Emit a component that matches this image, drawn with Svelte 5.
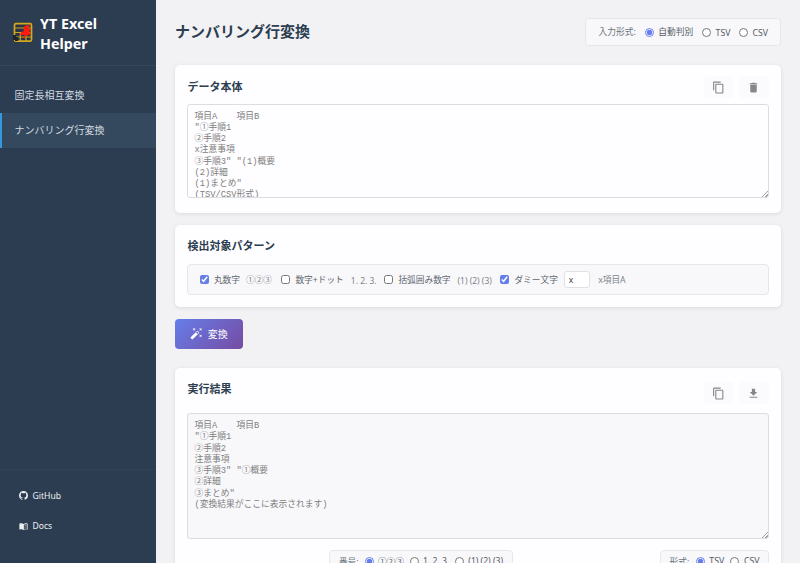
<script>
  let inputFormat = $state('auto');
  let numberStyle = $state('circle');
  let outputFormat = $state('tsv');
  let circled = $state(true);
  let dotted = $state(false);
  let bracketed = $state(false);
  let dummy = $state(true);
  let dummyChar = $state('x');

  const source = '項目A\t項目B\n"①手順1\n②手順2\nx注意事項\n③手順3"\t"(1)概要\n(2)詳細\n(1)まとめ"\n(TSV/CSV形式)';
  const result = '項目A\t項目B\n"①手順1\n②手順2\n注意事項\n③手順3"\t"①概要\n②詳細\n③まとめ"\n(変換結果がここに表示されます)';
</script>

{#snippet copyIcon()}
  <svg width="13" height="13" viewBox="0 0 24 24"><path d="M16 1H4c-1.1 0-2 .9-2 2v14h2V3h12V1zm3 4H8c-1.1 0-2 .9-2 2v14c0 1.1.9 2 2 2h11c1.1 0 2-.9 2-2V7c0-1.1-.9-2-2-2zm0 16H8V7h11v14z" /></svg>
{/snippet}

<div class="app">
  <aside>
    <div class="brand">
      <svg class="logo" width="20" height="21" viewBox="0 0 20 21">
        <rect x="1.500" y="1.700" width="17" height="17.500" rx="1.500" fill="#2b3346" stroke="#d0a91c" stroke-width="1.700" />
        <path d="M2 6h16M2 10.500h16M7.300 10v9M13 10v9M2 15h16" stroke="#c9a51c" stroke-width="1.200" fill="none" />
        <path d="M0 13h3v2h2v4H2v-1H0z" fill="#20252c" />
        <path d="M11.500 3.800 17 3l-2 3.800h3l-2.200 3.500H18l-1.600 2.700-2.400.2-3 4 .4-4.200H7l1.400-3.200 2-.2z" fill="#fb1b12" />
      </svg>
      <h1>YT Excel<br />Helper</h1>
    </div>
    <nav>
      <a href="#fixed">固定長相互変換</a>
      <a href="#numbering" class="active">ナンバリング行変換</a>
    </nav>
    <div class="links">
      <a href="#github">
        <svg width="9" height="9" viewBox="0 0 16 16"><path d="M8 0C3.58 0 0 3.58 0 8c0 3.54 2.29 6.53 5.47 7.59.4.07.55-.17.55-.38 0-.19-.01-.82-.01-1.49-2.01.37-2.53-.49-2.69-.94-.09-.23-.48-.94-.82-1.13-.28-.15-.68-.52-.01-.53.63-.01 1.08.58 1.23.82.72 1.21 1.87.87 2.33.66.07-.52.28-.87.51-1.07-1.78-.2-3.64-.89-3.64-3.95 0-.87.31-1.59.82-2.15-.08-.2-.36-1.02.08-2.12 0 0 .67-.21 2.2.82a7.5 7.5 0 0 1 4 0c1.53-1.04 2.2-.82 2.2-.82.44 1.1.16 1.92.08 2.12.51.56.82 1.27.82 2.15 0 3.07-1.87 3.75-3.65 3.95.29.25.54.73.54 1.48 0 1.07-.01 1.93-.01 2.2 0 .21.15.46.55.38A8.01 8.01 0 0 0 16 8c0-4.42-3.58-8-8-8z" /></svg>
        <span>GitHub</span>
      </a>
      <a href="#docs">
        <svg width="9" height="9" viewBox="0 0 24 24"><path fill-rule="evenodd" d="M12 5C9.500 3.500 4.500 3 1 4.500V20.500c3.500-1.500 8.500-1 11 .5 2.500-1.500 7.500-2 11-.5V4.500C19.500 3 14.500 3.500 12 5zm9 13.500c-2.500-.7-5.500-.5-8 .5V7c2.500-1.200 5.500-1.500 8-.8v12.300zM14.500 9v1.700c1.700-.6 3.500-.7 5-.4V8.700c-1.700-.3-3.500-.2-5 .3zm0 4v1.700c1.700-.6 3.500-.7 5-.4v-1.600c-1.700-.3-3.500-.2-5 .3z" /></svg>
        <span>Docs</span>
      </a>
    </div>
  </aside>

  <main>
    <header>
      <h2>ナンバリング行変換</h2>
      <div class="options format">
        <span class="caption">入力形式:</span>
        <label><input type="radio" bind:group={inputFormat} value="auto" /><span>自動判別</span></label>
        <label><input type="radio" bind:group={inputFormat} value="tsv" /><span class="latin">TSV</span></label>
        <label><input type="radio" bind:group={inputFormat} value="csv" /><span class="latin">CSV</span></label>
      </div>
    </header>

    <section class="card data">
      <div class="card-head">
        <h3>データ本体</h3>
        <div class="tools">
          <button aria-label="copy">{@render copyIcon()}</button>
          <button aria-label="clear"><svg width="13" height="13" viewBox="0 0 24 24"><path d="M6 19c0 1.1.9 2 2 2h8c1.1 0 2-.9 2-2V7H6v12zM19 4h-3.500l-1-1h-5l-1 1H5v2h14V4z" /></svg></button>
        </div>
      </div>
      <textarea class="source" placeholder={source}></textarea>
    </section>

    <section class="card patterns">
      <h3>検出対象パターン</h3>
      <div class="pattern-row">
        <label style:width="81.500px"><input type="checkbox" bind:checked={circled} /><span>丸数字</span><small class="circles">①②③</small></label>
        <label style:width="103px"><input type="checkbox" bind:checked={dotted} /><span>数字+ドット</span><small class="latin">1. 2. 3.</small></label>
        <label style:width="116px"><input type="checkbox" bind:checked={bracketed} /><span>括弧囲み数字</span><small class="latin">(1) (2) (3)</small></label>
        <label><input type="checkbox" bind:checked={dummy} /><span>ダミー文字</span></label>
        <input class="char" type="text" bind:value={dummyChar} />
        <small class="sample">x項目A</small>
      </div>
    </section>

    <button class="run">
      <svg width="13" height="13" viewBox="0 0 24 24"><path d="M7.500 5.600 10 7 8.600 4.500 10 2 7.500 3.400 5 2l1.400 2.500L5 7zm12 9.800L17 14l1.400 2.500L17 19l2.500-1.400L22 19l-1.400-2.500L22 14zM22 2l-2.500 1.400L17 2l1.400 2.500L17 7l2.500-1.400L22 7l-1.400-2.500zm-7.630 5.290a.996.996 0 0 0-1.410 0L1.290 18.960a.996.996 0 0 0 0 1.410l2.340 2.340c.39.39 1.020.39 1.410 0L16.700 11.050a.996.996 0 0 0 0-1.410l-2.330-2.350zm-1.030 5.490-2.120-2.120 2.440-2.440 2.120 2.120-2.440 2.440z" /></svg>
      <span>変換</span>
    </button>

    <section class="card output">
      <div class="card-head">
        <h3>実行結果</h3>
        <div class="tools">
          <button aria-label="copy result">{@render copyIcon()}</button>
          <button aria-label="download"><svg width="13" height="13" viewBox="0 0 24 24"><path d="M19 9h-4V3H9v6H5l7 7 7-7zM5 18v2h14v-2H5z" /></svg></button>
        </div>
      </div>
      <textarea class="result" placeholder={result} readonly></textarea>
      <div class="output-options">
        <div class="options numbers">
          <span class="caption">番号:</span>
          <label><input type="radio" bind:group={numberStyle} value="circle" /><span>①②③</span></label>
          <label><input type="radio" bind:group={numberStyle} value="dot" /><span>1. 2. 3.</span></label>
          <label><input type="radio" bind:group={numberStyle} value="bracket" /><span>(1) (2) (3)</span></label>
        </div>
        <div class="options kind">
          <span class="caption">形式:</span>
          <label><input type="radio" bind:group={outputFormat} value="tsv" /><span>TSV</span></label>
          <label><input type="radio" bind:group={outputFormat} value="csv" /><span>CSV</span></label>
        </div>
      </div>
    </section>
  </main>
</div>

<style>
  :global(body) { margin: 0; overflow: hidden; }
  * { box-sizing: border-box; }
  .app {
    display: flex;
    height: 563px;
    overflow: hidden;
    background: #f2f1f4;
    font-family: "Noto Sans", "Noto Sans CJK JP", sans-serif;
    color: #2c3e50;
  }
  h1, h2, h3 { margin: 0; }
  button, input, textarea { font-family: inherit; }
  aside {
    width: 156px;
    flex: none;
    display: flex;
    flex-direction: column;
    background: #2c3d52;
    color: #ecf0f1;
  }
  .brand {
    height: 66px;
    display: flex;
    align-items: center;
    gap: 7.500px;
    padding: 2px 12.500px 0;
    border-bottom: 1px solid #35475b;
  }
  .logo { flex: none; margin-top: -3px; }
  h1 { font-size: 14.300px; line-height: 20px; font-weight: 700; color: #fff; }
  nav { padding-top: 12px; }
  nav a {
    display: flex;
    align-items: center;
    height: 35px;
    padding: 0 0 2px 12.500px;
    border-left: 2px solid transparent;
    font-size: 10px;
    color: #d3dae1;
    text-decoration: none;
  }
  nav a.active { background: #34495e; border-left-color: #3498db; }
  .links { margin-top: auto; height: 94px; padding: 10.500px 18.500px; border-top: 1px solid #314358; }
  .links a {
    display: flex;
    align-items: center;
    gap: 5px;
    height: 30.500px;
    font-size: 8.600px;
    color: #ecf0f1;
    text-decoration: none;
  }
  svg { fill: currentColor; flex: none; }
  main { flex: 1; padding: 18px 19px 0; min-width: 0; }
  header { display: flex; justify-content: space-between; align-items: flex-start; height: 47px; }
  h2 { font-size: 15px; line-height: 26px; font-weight: 700; }
  .options {
    display: flex;
    align-items: center;
    height: 28px;
    border: 1px solid #e6e7eb;
    border-radius: 4px;
    background: #f8f8fb;
    font-size: 8.750px;
    color: #555c64;
    white-space: nowrap;
  }
  .options label { display: flex; align-items: center; }
  .options input, .pattern-row input[type='checkbox'] {
    width: 9px;
    height: 9px;
    margin: 0;
    flex: none;
    accent-color: #667eea;
  }
  .options input { margin-right: 4.500px; }
  .options label + label { margin-left: 8.700px; }
  .options .latin { font-size: 8.700px; padding-top: 1px; }
  .format .caption, .format label:nth-child(2) span { margin-top: -1px; }
  .format input { margin-top: 1px; }
  .caption { margin-right: 9px; color: #6c757d; }
  .format { width: 196px; padding-left: 12.500px; }
  .card {
    background: #fefdff;
    border-radius: 5px;
    padding: 12px 12.500px;
    box-shadow: 0 1px 4px rgba(0, 0, 0, 0.1);
    margin-bottom: 12px;
  }
  .data { height: 148px; }
  .patterns { height: 82px; }
  .card-head { display: flex; justify-content: space-between; height: 26.500px; }
  h3 { font-size: 11px; line-height: 18px; font-weight: 700; }
  .data h3 { line-height: 19px; }
  .tools { display: flex; gap: 5px; margin-top: -1px; }
  .tools button {
    width: 30px;
    height: 22px;
    display: flex;
    align-items: center;
    justify-content: center;
    padding: 0;
    border: 0;
    border-radius: 3px;
    background: #fbfafc;
    color: #858789;
  }
  textarea {
    display: block;
    width: calc(100% + 0.500px);
    margin: 0 0 0 -0.500px;
    padding: 7px 6px 0 6.400px;
    border: 1px solid #dcdde1;
    border-radius: 3px;
    background: #fefdff;
    font-family: "Liberation Mono", "Noto Sans CJK JP", monospace;
    font-size: 8.750px;
    line-height: 11.250px;
    resize: vertical;
    overflow: hidden;
    outline: 0;
  }
  textarea::-webkit-resizer {
    background: linear-gradient(135deg, transparent 79%, #a0a0a4 79%, #a0a0a4 83%, transparent 83%, transparent 90%, #a0a0a4 90%, #a0a0a4 94%, transparent 94%);
  }
  textarea::placeholder { color: #808080; opacity: 1; overflow: visible; }
  .source { height: 94.500px; }
  .patterns h3 { height: 27px; }
  .pattern-row {
    display: flex;
    align-items: center;
    height: 31px;
    margin-left: -0.500px;
    padding-left: 11.900px;
    border: 1px solid #e4e6ea;
    border-radius: 4px;
    background: #f8f8fb;
    font-size: 8.700px;
    color: #60666d;
    white-space: nowrap;
  }
  .pattern-row label { display: flex; align-items: center; flex: none; }
  .pattern-row label span { margin-left: 5px; }
  small { margin-left: 7px; font-size: 8.700px; color: #7f858b; }
  .circles { margin-left: 6px; }
  small.latin { font-size: 8.500px; padding-top: 1px; }
  .pattern-row .char {
    width: 26px;
    height: 17px;
    margin-left: 5.800px;
    padding: 0 4px;
    border: 1px solid #dee2e6;
    border-radius: 3px;
    background: #fff;
    color: #444;
    font-size: 8.500px;
  }
  .sample { margin-left: 8.500px; }
  .run {
    display: flex;
    align-items: center;
    justify-content: center;
    gap: 5px;
    width: 67.500px;
    height: 30px;
    margin: 0 0 19px;
    padding: 0 0 1px;
    border: 0;
    border-radius: 4px;
    background: linear-gradient(135deg, #667eea, #764ba2);
    color: #fff;
    font-size: 10px;
  }
  .output { height: 230px; margin: 0; }
  .output .card-head { height: 33px; }
  .output h3 { margin-top: -0.500px; }
  .output .tools { padding-top: 3px; }
  .result { height: 126px; background: #f8f8fb; }
  .output-options { display: flex; margin-top: 11px; }
  .numbers { width: 184px; margin-left: 141.500px; padding-left: 9px; height: 23px; }
  .kind { width: 109px; margin-left: auto; padding-left: 9px; height: 23px; }
  .output-options .options { padding-bottom: 1px; }
  .output-options .caption { margin-right: 6.500px; }
  .output-options .options label + label { margin-left: 6.200px; }
  .numbers { font-size: 8.600px; }
  .numbers input { margin-right: 4px; }
</style>
